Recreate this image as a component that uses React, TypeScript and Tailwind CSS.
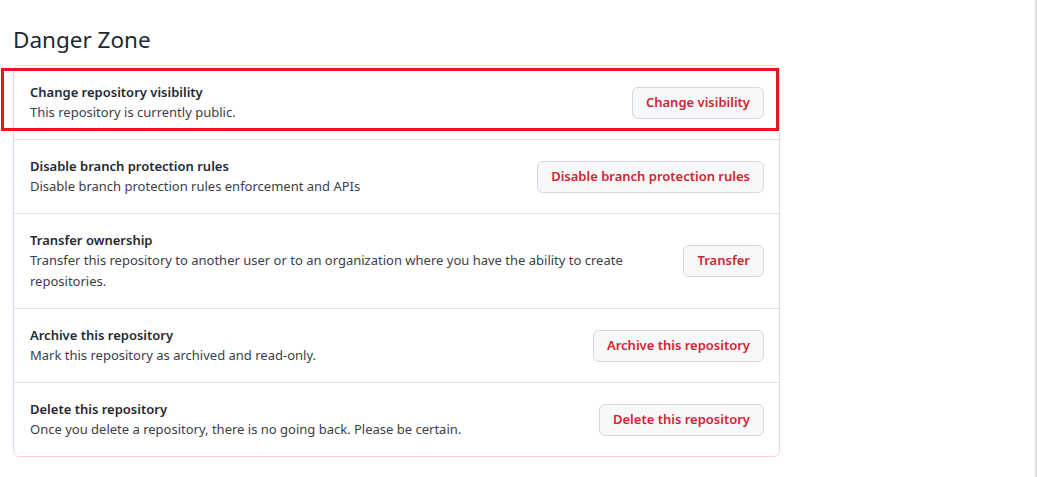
import React from "react";

type Row = { title: string; desc: string; button: string };

const rows: Row[] = [
  { title: "Change repository visibility", desc: "This repository is currently public.", button: "Change visibility" },
  { title: "Disable branch protection rules", desc: "Disable branch protection rules enforcement and APIs", button: "Disable branch protection rules" },
  {
    title: "Transfer ownership",
    desc: "Transfer this repository to another user or to an organization where you have the ability to create repositories.",
    button: "Transfer",
  },
  { title: "Archive this repository", desc: "Mark this repository as archived and read-only.", button: "Archive this repository" },
  { title: "Delete this repository", desc: "Once you delete a repository, there is no going back. Please be certain.", button: "Delete this repository" },
];

export default function App() {
  return (
    <div
      className="relative w-[1037px] h-[477px] bg-white overflow-hidden text-[#24292f]"
      style={{ fontFamily: '"Noto Sans", "Open Sans", sans-serif' }}
    >
      <div className="absolute right-0 top-0 bottom-0 w-[2px] bg-[#dcdcdc]" />
      <div className="pl-[13px] pt-[24px] w-[780px]">
        <h2 className="text-[22.5px] leading-[32px] font-normal text-[#24292f] mb-[9px]">Danger Zone</h2>
        <div className="border border-[#ffd0d0] rounded-[6px]">
          {rows.map((r, i) => (
            <div
              key={r.title}
              className={`flex items-center justify-between pl-[16px] pr-[15px] py-[16px] ${i > 0 ? "border-t border-[#dfe3e8]" : ""}`}
            >
              <div className="max-w-[620px]">
                <div className="text-[13px] leading-[20px] font-semibold text-[#24292f]">{r.title}</div>
                <div className="text-[13px] leading-[21px] text-[#3b4047]">{r.desc}</div>
              </div>
              <button className="h-[32px] px-[13px] rounded-[6px] border border-[#d5d9de] bg-[#f6f8fa] text-[13px] font-semibold text-[#d1242f] whitespace-nowrap shrink-0">
                {r.button}
              </button>
            </div>
          ))}
        </div>
      </div>
      <div className="absolute left-[1px] top-[68px] w-[778px] h-[63px] border-[3px] border-[#e8141f] pointer-events-none" />
    </div>
  );
}
